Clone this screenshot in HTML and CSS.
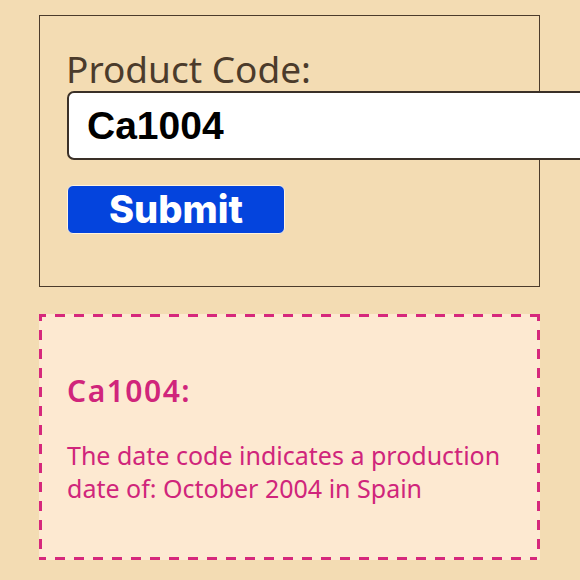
FILE: index.html
```html
<!DOCTYPE html>
<html>
<head>
<meta charset="utf-8">
<link rel="stylesheet" href="styles.css">
</head>
<body>
<div class="page">
  <form class="form-box">
    <label class="label" for="code">Product Code:</label>
    <div class="input" id="code">Ca1004</div>
    <button type="button" class="submit">Submit</button>
  </form>
  <div class="result">
    <div class="result-title">Ca1004:</div>
    <p class="result-text">The date code indicates a production date of: October 2004 in Spain</p>
  </div>
</div>
</body>
</html>
```
FILE: styles.css
```css
html, body {
  margin: 0;
  padding: 0;
  background: #f3dcb3;
  overflow: hidden;
}
.page {
  width: 580px;
  height: 580px;
  padding: 15px 0 0 39px;
  box-sizing: border-box;
  display: flex;
  flex-direction: column;
  gap: 27px;
}
.form-box {
  width: 501px;
  height: 272px;
  box-sizing: border-box;
  border: 1px solid #4b3b2b;
  padding: 33px 0 0 27px;
  margin: 0;
  display: flex;
  flex-direction: column;
  align-items: flex-start;
}
.label {
  font-family: "Noto Sans", sans-serif;
  font-size: 37px;
  color: #4b3b2b;
  line-height: 40px;
  margin-left: -1px;
}
.input {
  width: 540px;
  height: 69px;
  box-sizing: border-box;
  margin-top: 2px;
  background: #fff;
  border: 2px solid #3a3028;
  border-radius: 7px;
  font-family: "Liberation Sans", Arial, sans-serif;
  font-weight: bold;
  font-size: 39px;
  color: #000;
  padding-left: 18px;
  line-height: 65px;
}
.submit {
  margin-top: 25px;
  width: 218px;
  height: 49px;
  box-sizing: border-box;
  background: #0444dd;
  border: 1px solid #fff4e0;
  border-radius: 6px;
  color: #fff;
  font-family: Inter, "Liberation Sans", sans-serif;
  font-weight: 800;
  font-size: 38px;
  line-height: 45px;
  padding: 0;
}
.result {
  width: 501px;
  height: 246px;
  box-sizing: border-box;
  background:
    repeating-linear-gradient(to right, #d6287c 0 10px, transparent 10px 19px) -3px 0 / 100% 3px no-repeat,
    repeating-linear-gradient(to right, #d6287c 0 10px, transparent 10px 19px) -3px 100% / 100% 3px no-repeat,
    repeating-linear-gradient(to bottom, #d6287c 0 10px, transparent 10px 19px) 0 -3px / 3px 100% no-repeat,
    repeating-linear-gradient(to bottom, #d6287c 0 10px, transparent 10px 19px) 100% -3px / 3px 100% no-repeat,
    #fde9d1;
  padding: 59px 20px 0 28px;
}
.result-title {
  font-family: "Noto Sans", sans-serif;
  font-weight: 600;
  font-size: 30px;
  letter-spacing: 1.5px;
  color: #d0257b;
  line-height: 36px;
}
.result-text {
  margin: 30px 0 0;
  font-family: "Noto Sans", sans-serif;
  font-size: 25px;
  line-height: 33px;
  color: #d0257b;
}
```
